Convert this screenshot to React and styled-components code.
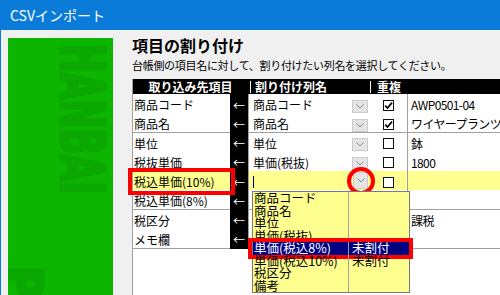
import React from "react";
import styled, { createGlobalStyle, css } from "styled-components";

// < STYLE >
const GlobalStyle = createGlobalStyle`
    *, *::before, *::after { box-sizing: border-box; }
    html, body {
        margin: 0;
        padding: 0;
        background: #f0f0f0;
    }
    body {
        font-family: "Noto Sans CJK JP", "Liberation Sans", sans-serif;
    }
`;

const BLUE = "#0a7bd8";
const YELLOW = "#ffff90";
const GRID = "#a0a0a0";
const COLS = "97px 18px 122px 37px 1fr";

const Window = styled.div`
    width: 500px;
    height: 295px;
    display: flex;
    flex-direction: column;
    overflow: hidden;
    background: #f0f0f0;
`;

const TitleBar = styled.div`
    height: 30px;
    flex: none;
    display: flex;
    align-items: center;
    padding-left: 10px;
    background: ${BLUE};
    color: #fff;
    font-size: 14px;
`;

const Body = styled.div`
    flex: 1;
    min-height: 0;
    display: flex;
    border-left: 1px solid ${BLUE};
`;

const Banner = styled.div`
    flex: none;
    width: 105px;
    margin: 8px 0 0 7px;
    background: #0cb600;
    overflow: hidden;

    svg { display: block; }
`;

const Content = styled.div`
    flex: 1;
    min-width: 0;
    display: flex;
    flex-direction: column;
    padding: 5px 0 0 19px;
`;

const Heading = styled.div`
    font-size: 16px;
    line-height: 20px;
    font-weight: bold;
    color: #000;
`;

const Lead = styled.div`
    margin-top: 3px;
    font-size: 11px;
    line-height: 14px;
    letter-spacing: -0.3px;
    color: #000;
    white-space: nowrap;
`;

const Table = styled.div`
    flex: 1;
    margin-top: 7px;
    background: #fff;
    border-left: 1px solid ${GRID};
    font-size: 12px;
    color: #000;
`;

const HeadRow = styled.div`
    display: grid;
    grid-template-columns: ${COLS};
    align-items: center;
    height: 15px;
    background: #000;
    color: #fff;
    font-weight: bold;
`;

const HeadCell = styled.div`
    grid-column: span ${p => p.$span || 1};
    line-height: 12px;
    white-space: nowrap;
    text-align: ${p => (p.$center ? "center" : "left")};
    padding-left: ${p => (p.$pad || 0)}px;
    margin-left: ${p => (p.$shift || 0)}px;
    border-left: ${p => (p.$sep ? "1px solid #fff" : "none")};
`;

const Row = styled.div`
    display: grid;
    grid-template-columns: ${COLS};
    height: 19.25px;
`;

const cellBase = css`
    display: flex;
    align-items: center;
    padding-top: 2px;
    white-space: nowrap;
    background: ${p => (p.$active ? YELLOW : "#fff")};
    border-bottom: 1px solid ${GRID};
`;

const NameCell = styled.div`
    ${cellBase};
    position: relative;
    padding-left: 1px;

    ${p => p.$marked && css`
        &::after {
            content: "";
            position: absolute;
            top: -3px;
            bottom: -5px;
            left: -5px;
            right: -5px;
            border: 4px solid #f00;
            z-index: 2;
        }
    `}
`;

const ArrowCell = styled.div`
    display: flex;
    align-items: center;
    justify-content: center;
    padding-top: 2px;
    background: #000;
    color: #fff;
    font-size: 12px;
`;

const MapCell = styled.div`
    ${cellBase};
    position: relative;
    justify-content: space-between;
    padding-left: 4px;
    padding-right: 2px;
    border-left: 1px solid ${GRID};
`;

const CheckCell = styled.div`
    ${cellBase};
    justify-content: center;
`;

const ValueCell = styled.div`
    ${cellBase};
    padding-left: 3px;
    letter-spacing: -0.6px;
    overflow: hidden;
    border-left: 1px solid ${GRID};
`;

const Caret = styled.span`
    width: 1px;
    height: 12px;
    background: #000080;
`;

const DropButton = styled.div`
    position: relative;
    flex: none;
    display: flex;
    align-items: center;
    justify-content: center;
    width: ${p => (p.$active ? 15 : 16)}px;
    height: ${p => (p.$active ? 17 : 13)}px;
    margin-top: ${p => (p.$active ? -2 : 3)}px;
    background: #e5e5e5;
    border: 1px solid #cccccc;

    ${p => p.$ringed && css`
        &::after {
            content: "";
            position: absolute;
            left: 50%;
            top: 50%;
            width: 28px;
            height: 28px;
            transform: translate(-50%, -50%);
            border: 4px solid #f00;
            border-radius: 50%;
            z-index: 2;
        }
    `}
`;

const Box = styled.div`
    width: 11px;
    height: 11px;
    margin-top: 1px;
    border: 1px solid #111;
    background: #fff;
    display: flex;
    align-items: center;
    justify-content: center;
`;

const DropList = styled.div`
    position: absolute;
    top: calc(100% + 1px);
    left: 3px;
    width: 158px;
    background: ${YELLOW};
    border: 1px solid #7a7a7a;
    font-size: 12.5px;
    z-index: 3;
`;

const Option = styled.div`
    position: relative;
    display: grid;
    grid-template-columns: 95px 1fr;
    height: 12.5px;
    line-height: 12.5px;
    white-space: nowrap;
    background: ${p => (p.$selected ? "#000080" : "transparent")};
    color: ${p => (p.$selected ? "#fff" : "#000")};

    ${p => p.$selected && css`
        &::after {
            content: "";
            position: absolute;
            top: -4px;
            bottom: -4px;
            left: -5px;
            right: -4px;
            border: 4px solid #f00;
        }
    `}
`;

const OptLabel = styled.span`
    padding-left: 1px;
`;

const OptNote = styled.span`
    padding-left: 3px;
    border-left: 1px solid ${GRID};
`;
// </ STYLE >

const rows = [
    { name: "商品コード", map: "商品コード", dup: true, value: "AWP0501-04" },
    { name: "商品名", map: "商品名", dup: true, value: "ワイヤープランツ" },
    { name: "単位", map: "単位", dup: false, value: "鉢" },
    { name: "税抜単価", map: "単価(税抜)", dup: false, value: "1800" },
    { name: "税込単価(10%)", map: "", dup: false, value: "", active: true },
    { name: "税込単価(8%)", map: "", dup: null, value: "" },
    { name: "税区分", map: "", dup: null, value: "課税" },
    { name: "メモ欄", map: "", dup: null, value: "" },
];

const options = [
    { label: "商品コード" },
    { label: "商品名" },
    { label: "単位" },
    { label: "単価(税抜)" },
    { label: "単価(税込8%)", note: "未割付", selected: true },
    { label: "単価(税込10%)", note: "未割付" },
    { label: "税区分" },
    { label: "備考" },
];

function Chevron() {
    return (
        <svg width="8" height="5" viewBox="0 0 8 5">
            <path d="M0.5 0.5 L4 4 L7.5 0.5" fill="none" stroke="#8a8a8a" strokeWidth="1" />
        </svg>
    );
}

function Check({ on }) {
    return (
        <Box>
            {on && (
                <svg width="9" height="9" viewBox="0 0 9 9">
                    <path d="M1.2 4.6 L3.5 7 L8 1.6" fill="none" stroke="#000" strokeWidth="1.7" />
                </svg>
            )}
        </Box>
    );
}

function BannerArt() {
    const art = {
        fontFamily: "'DejaVu Sans Condensed', 'DejaVu Sans', sans-serif",
        fontWeight: "bold",
        fill: "#0aa800",
        stroke: "#0aa800",
        strokeWidth: 3,
        strokeLinejoin: "round",
    };
    return (
        <svg width="105" height="257" viewBox="0 0 105 257">
            <text
                {...art}
                transform="translate(53 6) rotate(90)"
                fontSize="60"
                textLength="150"
                lengthAdjust="spacingAndGlyphs">
                HANBAI
            </text>
            <text
                {...art}
                transform="translate(-3 228) rotate(90)"
                fontSize="52">
                Pro
            </text>
        </svg>
    );
}

function DropDown() {
    return (
        <DropList>
            {options.map(o => (
                <Option key={o.label} $selected={o.selected}>
                    <OptLabel>{o.label}</OptLabel>
                    <OptNote>{o.note}</OptNote>
                </Option>
            ))}
        </DropList>
    );
}

class App extends React.Component {
    render() {
        return (
            <Window>
                <GlobalStyle />
                <TitleBar>CSVインポート</TitleBar>

                <Body>
                    <Banner>
                        <BannerArt />
                    </Banner>

                    <Content>
                        <Heading>項目の割り付け</Heading>
                        <Lead>台帳側の項目名に対して、割り付けたい列名を選択してください。</Lead>

                        <Table>
                            <HeadRow>
                                <HeadCell $span={2} $center>取り込み先項目</HeadCell>
                                <HeadCell $sep $shift={2} $pad={4}>割り付け列名</HeadCell>
                                <HeadCell $sep $center>重複</HeadCell>
                                <HeadCell $sep />
                            </HeadRow>

                            {rows.map(r => (
                                <Row key={r.name}>
                                    <NameCell $active={r.active} $marked={r.active}>{r.name}</NameCell>
                                    <ArrowCell>←</ArrowCell>
                                    <MapCell $active={r.active}>
                                        {r.active ? <Caret /> : <span>{r.map}</span>}
                                        {r.dup !== null && (
                                            <DropButton $active={r.active} $ringed={r.active}>
                                                <Chevron />
                                            </DropButton>
                                        )}
                                        {r.active && <DropDown />}
                                    </MapCell>
                                    <CheckCell $active={r.active}>
                                        {r.dup !== null && <Check on={r.dup} />}
                                    </CheckCell>
                                    <ValueCell $active={r.active}>{r.value}</ValueCell>
                                </Row>
                            ))}
                        </Table>
                    </Content>
                </Body>
            </Window>
        );
    }
}

export default App;
